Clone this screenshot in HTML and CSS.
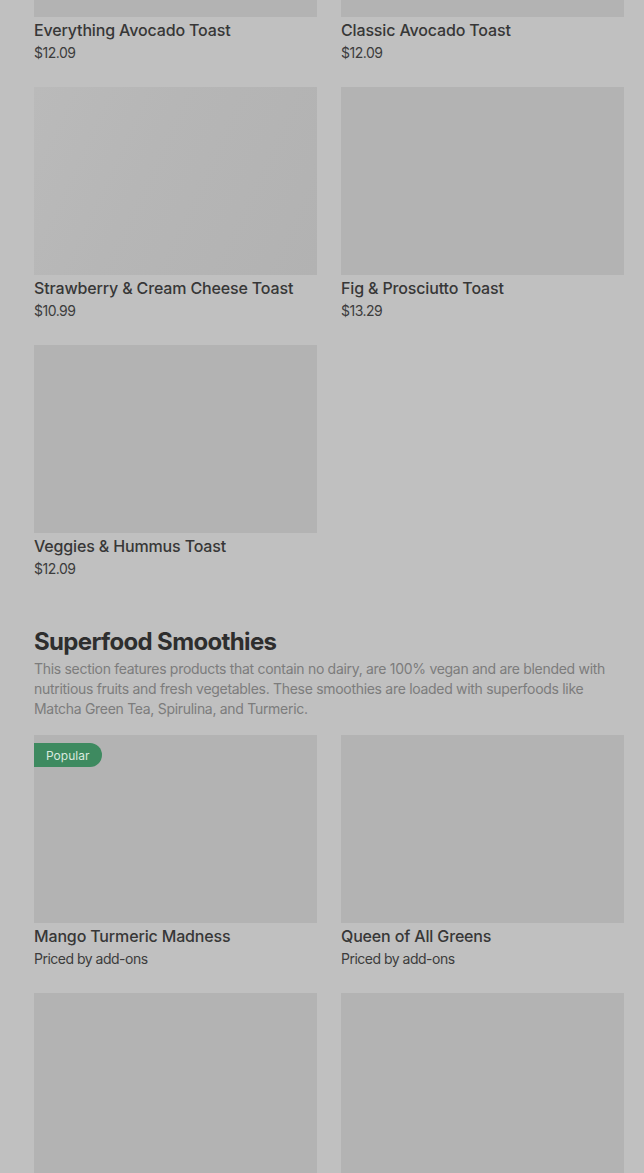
FILE: index.html
```html
<!DOCTYPE html>
<html lang="en">
<head>
<meta charset="utf-8">
<title>Menu</title>
<link rel="stylesheet" href="styles.css">
</head>
<body>
<main class="menu">
  <section class="section">
    <div class="grid">
      <article class="card"><div class="thumb"></div><h3 class="name">Everything Avocado Toast</h3><p class="price">$12.09</p></article>
      <article class="card"><div class="thumb"></div><h3 class="name">Classic Avocado Toast</h3><p class="price">$12.09</p></article>
      <article class="card"><div class="thumb shimmer"></div><h3 class="name">Strawberry &amp; Cream Cheese Toast</h3><p class="price">$10.99</p></article>
      <article class="card"><div class="thumb"></div><h3 class="name">Fig &amp; Prosciutto Toast</h3><p class="price">$13.29</p></article>
      <article class="card"><div class="thumb"></div><h3 class="name">Veggies &amp; Hummus Toast</h3><p class="price">$12.09</p></article>
    </div>
  </section>
  <section class="section">
    <h2 class="section-title">Superfood Smoothies</h2>
    <p class="section-desc">This section features products that contain no dairy, are 100% vegan and are blended with nutritious fruits and fresh vegetables. These smoothies are loaded with superfoods like Matcha Green Tea, Spirulina, and Turmeric.</p>
    <div class="grid">
      <article class="card"><div class="thumb"><span class="badge">Popular</span></div><h3 class="name">Mango Turmeric Madness</h3><p class="price">Priced by add-ons</p></article>
      <article class="card"><div class="thumb"></div><h3 class="name">Queen of All Greens</h3><p class="price">Priced by add-ons</p></article>
      <article class="card"><div class="thumb"></div></article>
      <article class="card"><div class="thumb"></div></article>
    </div>
  </section>
</main>
</body>
</html>
```

FILE: styles.css
```css
html, body {
  margin: 0;
  padding: 0;
  background: #c0c0c0;
  overflow: hidden;
}
body {
  font-family: Inter, "Noto Sans", "Liberation Sans", sans-serif;
  color: #333;
}
.menu {
  margin-top: -171px;
  padding: 0 20px 0 34px;
  display: flex;
  flex-direction: column;
  gap: 47px;
}
.grid {
  display: grid;
  grid-template-columns: 283px 283px;
  column-gap: 24px;
  row-gap: 24px;
}
.card {
  display: flex;
  flex-direction: column;
}
.thumb {
  position: relative;
  height: 188px;
  background: #b3b3b3;
}
.thumb.shimmer {
  background: linear-gradient(115deg, #bababa 0%, #b6b6b6 40%, #b2b2b2 100%);
}
.name {
  margin: 2px 0 0;
  font-size: 16px;
  line-height: 22px;
  font-weight: 500;
  color: #373737;
  letter-spacing: -0.15px;
}
.price {
  margin: 2px 0 0;
  font-size: 14px;
  line-height: 20px;
  font-weight: 400;
  color: #3c3c3c;
  letter-spacing: -0.5px;
}
.section-title {
  margin: 0;
  font-size: 24px;
  line-height: 32px;
  font-weight: 700;
  color: #2e2e2e;
  letter-spacing: -0.65px;
}
.section-desc {
  margin: 1px 0 16px;
  font-size: 14px;
  line-height: 20px;
  color: #7c7c7c;
  letter-spacing: -0.3px;
}
.badge {
  position: absolute;
  left: 0;
  top: 8px;
  height: 24px;
  padding: 0 13px 0 12px;
  display: flex;
  align-items: center;
  background: #3e8a60;
  color: #d9e9df;
  font-size: 12px;
  border-radius: 0 12px 12px 0;
}
```
